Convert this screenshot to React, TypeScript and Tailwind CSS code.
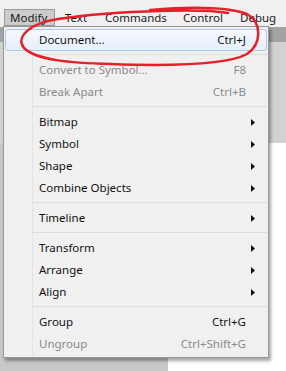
import React from "react";

type Item =
  | { kind: "sep" }
  | { kind: "item"; label: string; shortcut?: string; sub?: boolean; disabled?: boolean; hot?: boolean };

const items: Item[] = [
  { kind: "item", label: "Document...", shortcut: "Ctrl+J", hot: true },
  { kind: "sep" },
  { kind: "item", label: "Convert to Symbol...", shortcut: "F8", disabled: true },
  { kind: "item", label: "Break Apart", shortcut: "Ctrl+B", disabled: true },
  { kind: "sep" },
  { kind: "item", label: "Bitmap", sub: true },
  { kind: "item", label: "Symbol", sub: true },
  { kind: "item", label: "Shape", sub: true },
  { kind: "item", label: "Combine Objects", sub: true },
  { kind: "sep" },
  { kind: "item", label: "Timeline", sub: true },
  { kind: "sep" },
  { kind: "item", label: "Transform", sub: true },
  { kind: "item", label: "Arrange", sub: true },
  { kind: "item", label: "Align", sub: true },
  { kind: "sep" },
  { kind: "item", label: "Group", shortcut: "Ctrl+G" },
  { kind: "item", label: "Ungroup", shortcut: "Ctrl+Shift+G", disabled: true },
];

function Arrow() {
  return (
    <svg width="4" height="7" viewBox="0 0 4 7">
      <path d="M0 0 L4 3.5 L0 7 Z" fill="#111" />
    </svg>
  );
}

function Row({ item }: { item: Extract<Item, { kind: "item" }> }) {
  const color = item.disabled ? "text-[#8a8a8a]" : "text-[#111]";
  return (
    <div
      className={
        "relative flex items-center h-[22px] pl-[33px] rounded-[3px] border " +
        (item.hot
          ? "border-[#a9c9ee] bg-gradient-to-b from-[#f5f9fe] to-[#e6effb]"
          : "border-transparent")
      }
    >
      <span className={"flex-1 " + color}>{item.label}</span>
      {item.shortcut && <span className={color}>{item.shortcut}</span>}
      <span className="w-[20px] pl-[5px] flex items-center">{item.sub && <Arrow />}</span>
    </div>
  );
}

export default function App() {
  return (
    <div
      className="relative w-[286px] h-[371px] overflow-hidden flex flex-col bg-[#c9c9c9] text-[11.5px] leading-none"
      style={{ fontFamily: '"Noto Sans", "Open Sans", sans-serif' }}
    >
      {/* menubar */}
      <div className="h-[27px] bg-[#f0f0f0] pt-[9px] flex items-start text-[#1a1a1a] whitespace-nowrap">
        <div className="ml-[4px] h-[17px] w-[51px] pl-[5px] flex items-center bg-[#cbcbcb] border border-[#9a9a9a]">
          Modify
        </div>
        <div className="h-[17px] ml-[10px] w-[40px] flex items-center">Text</div>
        <div className="h-[17px] w-[78px] flex items-center">Commands</div>
        <div className="h-[17px] w-[57px] flex items-center">Control</div>
        <div className="h-[17px] flex items-center">Debug</div>
      </div>

      {/* app background */}
      <div className="h-[15px] bg-[#a3a3a3]" />
      <div className="h-[101px] bg-[#d2d2d2]" />
      <div className="flex-1 flex">
        <div className="w-[168px] bg-[#c8c8c8]" />
        <div className="flex-1 bg-white" />
      </div>

      {/* dropdown menu */}
      <div className="absolute left-[3px] top-[26px] w-[266px] border border-[#979797] bg-[#f0f0f0] px-[1px] py-[2px] shadow-[2px_3px_3px_rgba(0,0,0,0.35)]">
        <div className="absolute left-[28px] top-[2px] bottom-[2px] w-[2px] border-l border-[#e2e3e3] border-r-white" />
        <div className="relative flex flex-col">
          {items.map((it, i) =>
            it.kind === "sep" ? (
              <div key={i} className="h-[8px] flex items-center pl-[28px]">
                <div className="flex-1 h-[2px] border-t border-[#dcdcdc] border-b-white" />
              </div>
            ) : (
              <Row key={i} item={it} />
            )
          )}
        </div>
      </div>

      {/* red annotation ring */}
      <svg className="absolute inset-0 pointer-events-none" width="286" height="371" viewBox="0 0 286 371">
        <path
          d="M150 10 C185 7 225 6 247 14 C262 22 262 44 247 54 C225 66 165 66 110 64 C70 63 36 60 24 48 C15 37 30 23 58 19 C85 15 120 12 160 11 C190 10 210 10 228 13"
          fill="none"
          stroke="#e5202a"
          strokeWidth="2.5"
          strokeLinecap="round"
        />
      </svg>
    </div>
  );
}
